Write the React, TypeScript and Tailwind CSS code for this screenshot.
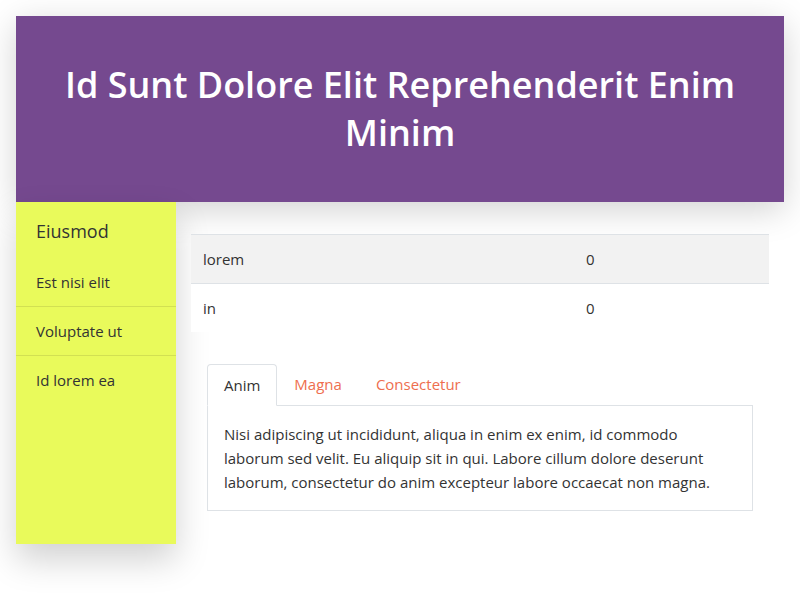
export default function App() {
  const font = { fontFamily: '"Segoe UI", "Open Sans", sans-serif' };
  return (
    <div className="min-h-screen bg-white p-4 text-[15px] text-[#333]" style={font}>
      <header className="bg-[#75498f] px-8 py-[45px] text-center shadow-[0_8px_32px_rgba(0,0,0,0.18)]">
        <h1 className="text-[36px] font-semibold leading-[48px] text-white">
          Id Sunt Dolore Elit Reprehenderit Enim Minim
        </h1>
      </header>
      <div className="flex">
        <aside className="h-[342px] w-40 shrink-0 bg-[#e9fa5b] shadow-[0_16px_32px_rgba(0,0,0,0.18)]">
          <div className="px-5 pt-[17px] pb-[15px] text-[18px] leading-6">Eiusmod</div>
          <ul>
            <li className="border-b border-[#d2e052] px-5 py-3 leading-6">Est nisi elit</li>
            <li className="border-b border-[#d2e052] px-5 py-3 leading-6">Voluptate ut</li>
            <li className="px-5 py-3 leading-6">Id lorem ea</li>
          </ul>
        </aside>
        <main className="flex-1 px-[15px] pt-8">
          <div className="border-t border-[#dee2e6]">
            <div className="grid grid-cols-[383px_1fr] border-b border-[#dee2e6] bg-[#f2f2f2]">
              <div className="px-3 py-3 leading-6">lorem</div>
              <div className="px-3 py-3 leading-6">0</div>
            </div>
            <div className="grid grid-cols-[383px_1fr] bg-white">
              <div className="px-3 py-3 leading-6">in</div>
              <div className="px-3 py-3 leading-6">0</div>
            </div>
          </div>
          <div className="mx-4 mt-8">
            <div className="flex border-b border-[#dee2e6]">
              <div className="-mb-px rounded-t border border-[#dee2e6] border-b-white bg-white px-4 py-2 leading-6">
                Anim
              </div>
              <div className="px-[17px] py-2 leading-6 text-[#ee6e4e]">Magna</div>
              <div className="px-[17px] py-2 leading-6 text-[#ee6e4e]">Consectetur</div>
            </div>
            <div className="border border-t-0 border-[#dee2e6] px-4 py-4 leading-6">
              Nisi adipiscing ut incididunt, aliqua in enim ex enim, id commodo laborum sed velit. Eu
              aliquip sit in qui. Labore cillum dolore deserunt laborum, consectetur do anim excepteur
              labore occaecat non magna.
            </div>
          </div>
        </main>
      </div>
    </div>
  );
}
